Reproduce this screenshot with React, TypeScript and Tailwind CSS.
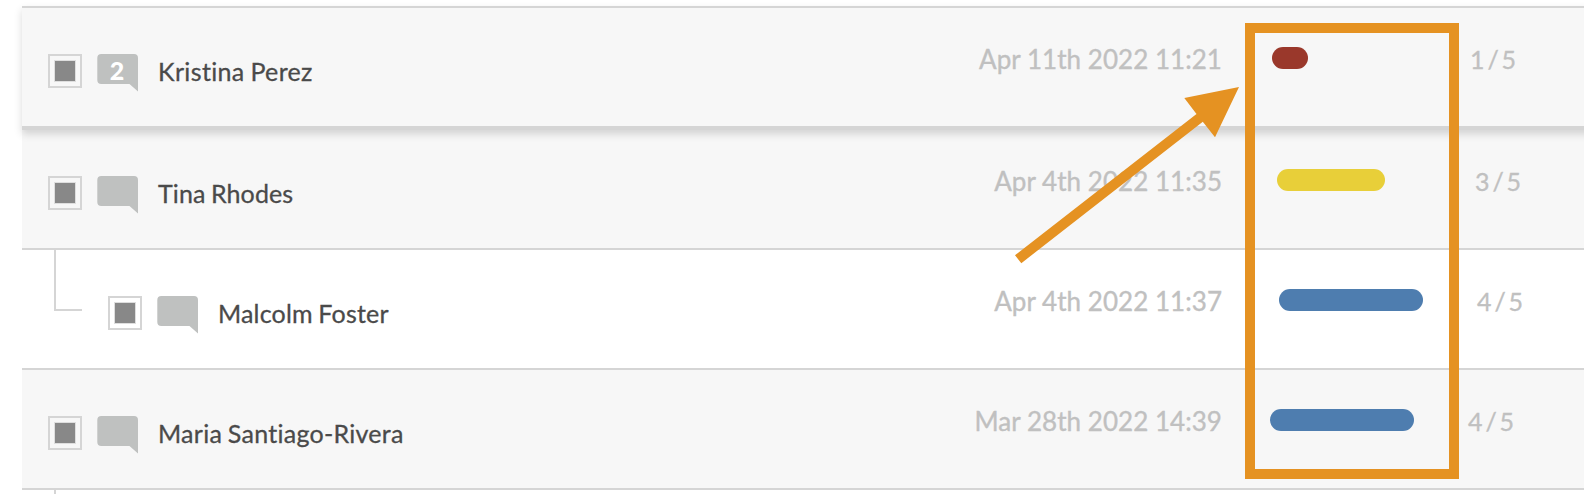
type Entry = {
  name: string;
  nameClass: string;
  date: string;
  score: string;
  count?: number;
  nested?: boolean;
  rowClass: string;
  barWrapClass: string;
  barClass: string;
};

const entries: Entry[] = [
  {
    name: 'Kristina Perez',
    nameClass: 'tracking-[0.35px]',
    date: 'Apr 11th 2022 11:21',
    score: '1 / 5',
    count: 2,
    rowClass:
      'relative z-10 -mr-5 h-[124px] border-t-2 border-b-4 bg-[#f7f7f7] pr-5 shadow-[0_4px_8px_rgba(0,0,0,0.15)]',
    barWrapClass: 'pl-[50px]',
    barClass: 'w-9 bg-[#9a382b]',
  },
  {
    name: 'Tina Rhodes',
    nameClass: 'tracking-[0.1px]',
    date: 'Apr 4th 2022 11:35',
    score: '3 / 5',
    rowClass: 'h-[120px] border-b-2 bg-[#f7f7f7]',
    barWrapClass: 'pl-[55px]',
    barClass: 'w-[108px] bg-[#e8cf39]',
  },
  {
    name: 'Malcolm Foster',
    nameClass: 'tracking-[0.18px]',
    date: 'Apr 4th 2022 11:37',
    score: '4 / 5',
    nested: true,
    rowClass: 'h-[120px] border-b-2 bg-white',
    barWrapClass: 'pl-[57px]',
    barClass: 'w-36 bg-[#4e7daf]',
  },
  {
    name: 'Maria Santiago-Rivera',
    nameClass: 'tracking-[0.27px]',
    date: 'Mar 28th 2022 14:39',
    score: '4 / 5',
    rowClass: 'h-[120px] border-b-2 bg-[#f7f7f7]',
    barWrapClass: 'pl-12',
    barClass: 'w-36 bg-[#4e7daf]',
  },
];

function Checkbox() {
  return (
    <div className="mt-[46px] flex size-[34px] shrink-0 items-center justify-center border-2 border-[#d5d5d5]">
      <div className="size-[22px] border border-[#dedede] bg-[#888888]" />
    </div>
  );
}

function Bubble({ count }: { count?: number }) {
  return (
    <div className="relative mt-[46px] ml-[15px] h-[38px] w-[41px] shrink-0">
      <svg className="block" width="41" height="38" viewBox="0 0 41 38" fill="#bfc1c0">
        <path d="M4.3 0H37a4 4 0 0 1 4 4V37.5L32.5 30H4.3a4 4 0 0 1-4-4V4a4 4 0 0 1 4-4Z" />
      </svg>
      {count !== undefined && (
        <span className="absolute inset-x-0 top-0 h-[34px] pr-px text-center text-[25px] leading-[33px] font-black text-white">
          {count}
        </span>
      )}
    </div>
  );
}

function Row({ entry }: { entry: Entry }) {
  return (
    <div className={`flex shrink-0 items-start border-[#d5d5d5] ${entry.rowClass}`}>
      {entry.nested ? (
        <div className="mr-[26px] ml-8 h-[61px] w-7 shrink-0 border-b-2 border-l-2 border-[#d5d5d5]" />
      ) : (
        <div className="w-[26px] shrink-0" />
      )}
      <Checkbox />
      <Bubble count={entry.count} />
      <div
        className={`mt-12 ml-5 text-[25px] leading-[30px] whitespace-nowrap text-[#4a4a4a] [-webkit-text-stroke:0.3px_#4a4a4a] [word-spacing:-1px] ${entry.nameClass}`}
      >
        {entry.name}
      </div>
      <div className="mt-[35px] flex-1 text-right text-[26px] leading-8 tracking-[0.04px] whitespace-nowrap text-[#c0c0c0] [-webkit-text-stroke:0.35px_#c0c0c0]">
        {entry.date}
      </div>
      <div className={`flex w-[362px] shrink-0 items-start ${entry.barWrapClass}`}>
        <div className="mt-[39px] w-[180px] shrink-0">
          <div className={`h-[22px] rounded-full ${entry.barClass}`} />
        </div>
        <div className="mt-9 ml-[18px] text-[25px] leading-[30px] whitespace-nowrap text-[#c0c0c0] [-webkit-text-stroke:0.3px_#c0c0c0] [word-spacing:-3.5px]">
          {entry.score}
        </div>
      </div>
    </div>
  );
}

export default function App() {
  return (
    <div className="relative h-[494px] w-[1584px] overflow-hidden bg-white pt-1.5 pl-[22px] font-['Lato',sans-serif] [font-variant-ligatures:none]">
      <div className="flex flex-col">
        {entries.map((entry) => (
          <Row key={entry.name} entry={entry} />
        ))}
        <div className="ml-8 h-1 w-0.5 bg-[#d5d5d5]" />
      </div>
      <div className="absolute top-[23px] left-[1245px] z-20 h-[456px] w-[214px] border-10 border-[#e59222]" />
      <svg className="absolute top-0 left-0 z-20" width="1584" height="494" viewBox="0 0 1584 494" fill="#e59222">
        <path d="M1239 87L1184.3 98L1196.5 114L1015 255.2L1021.3 263.2L1202.8 121.8L1215 137.3Z" />
      </svg>
    </div>
  );
}
